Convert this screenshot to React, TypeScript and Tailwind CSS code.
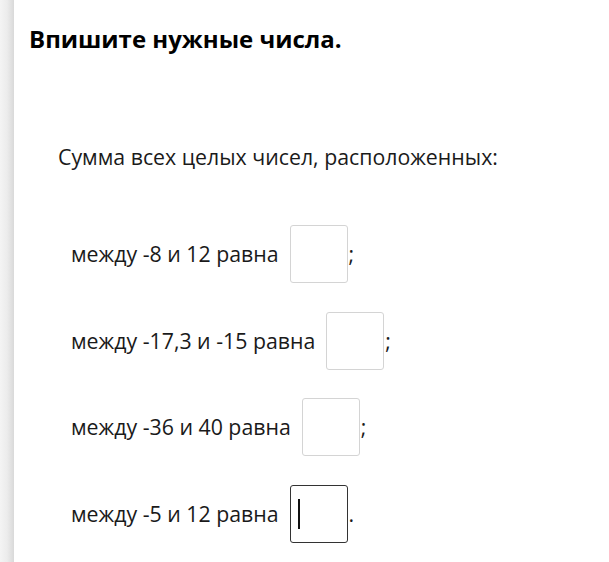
import React from 'react';

const rows = [
  { text: 'между -8 и 12 равна', end: ';', active: false },
  { text: 'между -17,3 и -15 равна', end: ';', active: false },
  { text: 'между -36 и 40 равна', end: ';', active: false },
  { text: 'между -5 и 12 равна', end: '.', active: true },
];

const App: React.FC = () => {
  return (
    <div className="flex h-[562px] w-[609px] bg-white font-['Open_Sans',sans-serif] text-[#111]">
      {/* Left scroll gutter */}
      <div className="h-full w-[14px] shrink-0 bg-gradient-to-r from-[#f4f4f4] via-[#ececec] to-[#d9d9d9]" />

      <div className="flex-1 pl-[15px] pt-[23px]">
        <h2 className="text-[24px] font-bold leading-[32px] text-black">Впишите нужные числа.</h2>

        <div className="pl-[29px] pt-[86px]">
          <p className="text-[21.3px] leading-[32px] text-[#1a1a1a]">Сумма всех целых чисел, расположенных:</p>

          <div className="flex flex-col gap-[28.67px] pl-[13px] pt-[52px]">
            {rows.map((row) => (
              <div key={row.text} className="flex items-center text-[21.3px] text-[#1a1a1a]">
                <span className="leading-[32px]">{row.text}</span>
                <div
                  className={`relative ml-[11px] h-[58px] w-[58px] shrink-0 rounded-[3px] border bg-white ${
                    row.active ? 'border-[#333]' : 'border-[#d4d4d4]'
                  }`}
                >
                  {row.active && (
                    <div className="absolute left-[7px] top-[13px] h-[30px] w-[2px] bg-[#111]" />
                  )}
                </div>
                <span className="ml-[1px] leading-[32px]">{row.end}</span>
              </div>
            ))}
          </div>
        </div>
      </div>
    </div>
  );
};

export default App;
